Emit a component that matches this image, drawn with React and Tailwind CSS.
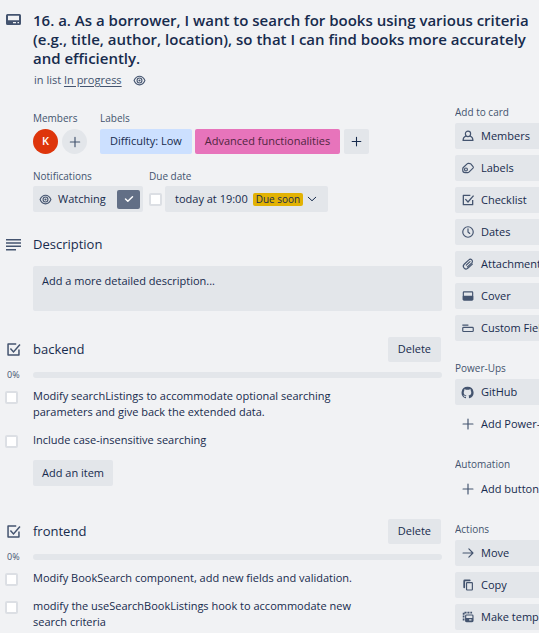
import React from "react";

const Svg = ({ size = 14, className = "", children }) => (
  <svg
    width={size}
    height={size}
    viewBox="0 0 24 24"
    fill="none"
    stroke="currentColor"
    strokeWidth="2"
    strokeLinecap="round"
    strokeLinejoin="round"
    aria-hidden="true"
    className={"shrink-0 " + className}
  >
    {children}
  </svg>
);

const CardIcon = () => (
  <svg width="15" height="12" viewBox="0 0 15 12" aria-hidden="true" className="shrink-0 text-[#44546f]">
    <path
      fill="currentColor"
      fillRule="evenodd"
      d="M1.500 0h12A1.500 1.500 0 0 1 15 1.500v8a1.500 1.500 0 0 1-1.500 1.500h-12A1.500 1.500 0 0 1 0 9.500v-8A1.500 1.500 0 0 1 1.500 0ZM2 1.800V6.300h11V1.800H2Zm5 6.200v1.200h3V8H7Zm4.500 0v1.200H13V8h-1.500Z"
    />
  </svg>
);

const EyeIcon = () => (
  <Svg size={13}>
    <path d="M2 12c2-4.700 5.500-8 10-8s8 3.300 10 8c-2 4.700-5.500 8-10 8s-8-3.300-10-8Z" />
    <circle cx="12" cy="12" r="4.500" />
    <circle cx="12" cy="12" r="1" />
  </Svg>
);

const PlusIcon = ({ size = 16 }) => (
  <Svg size={size}>
    <path d="M12 4v16M4 12h16" />
  </Svg>
);

const CheckBoxIcon = ({ size = 14, view = "0 0 24 24" }) => (
  <svg
    width={size}
    height={size}
    viewBox={view}
    fill="none"
    stroke="currentColor"
    strokeWidth="2.200"
    aria-hidden="true"
    className="shrink-0"
  >
    <path d="M16 4H4v16h16v-8" strokeLinejoin="round" />
    <path d="m7.500 10.500 4.500 5L21.500 4.500" />
  </svg>
);

const LinesIcon = () => (
  <svg width="15" height="12" viewBox="0 0 15 12" aria-hidden="true" className="shrink-0 text-[#44546f]">
    <path fill="currentColor" d="M0 0h15v1.500H0zM0 3.300h15v1.500H0zM0 6.600h15v1.500H0zM0 10h10v1.500H0z" />
  </svg>
);

const icons = {
  member: (
    <Svg>
      <path d="M12 3.500a4.500 4.500 0 0 0-4.500 4.500c0 2.500 1.500 5 4.500 5s4.500-2.500 4.500-5A4.500 4.500 0 0 0 12 3.500Z" />
      <path d="M8.500 12C5.500 13 3.500 15.500 3.500 19.500h17c0-4-2-6.500-5-7.500" />
    </Svg>
  ),
  label: (
    <Svg>
      <path d="M3 13.500c0-1 .3-1.700 1-2.400l6.500-6.300c.8-.8 1.700-1 2.700-.8l3.600.8 3.900 4.700c.6.8.6 1.800-.1 2.600l-7 7c-.6.6-1.400.9-2.200.9H7a4 4 0 0 1-4-4Z" />
      <circle cx="8.500" cy="14.500" r="2.500" />
    </Svg>
  ),
  check: <CheckBoxIcon />,
  clock: (
    <Svg>
      <circle cx="12" cy="12" r="9" />
      <path d="M12 6.500V12l3 2.500" />
    </Svg>
  ),
  clip: (
    <Svg>
      <path d="m11 17 7.500-7a3.500 3.500 0 0 0-5-5L5.500 12.500a4.600 4.600 0 0 0 6.500 6.700l7.500-7" />
      <path d="m15.500 8-6.500 6" />
    </Svg>
  ),
  cover: (
    <Svg>
      <rect x="4" y="5" width="16" height="14" rx="1" />
      <path fill="currentColor" d="M4 12.500h16V18H4z" />
    </Svg>
  ),
  fields: (
    <Svg>
      <path d="M3 7h9" />
      <rect x="3" y="11" width="18" height="7" rx="1.500" />
    </Svg>
  ),
  github: (
    <svg width="13" height="13" viewBox="2 2 20 20" fill="currentColor" aria-hidden="true" className="mr-px shrink-0">
      <path d="M12 3a9.200 9.200 0 0 0-2.900 17.900c.5.100.6-.2.600-.4v-1.700c-2.500.5-3.100-1.100-3.100-1.100-.4-1-1-1.300-1-1.300-.8-.6.1-.6.100-.6.900.1 1.400 1 1.400 1 .8 1.400 2.200 1 2.700.8.100-.6.300-1 .6-1.200-2-.2-4.200-1-4.200-4.500 0-1 .4-1.800.9-2.500-.1-.2-.4-1.200.1-2.400 0 0 .8-.2 2.500.9a8.700 8.700 0 0 1 4.600 0c1.700-1.200 2.500-.9 2.500-.9.500 1.200.2 2.200.1 2.400.6.700.9 1.500.9 2.500 0 3.500-2.100 4.300-4.200 4.500.3.300.6.900.6 1.700v2.500c0 .2.200.5.600.4A9.200 9.200 0 0 0 12 3Z" />
    </svg>
  ),
  plus: (
    <Svg>
      <path d="M12 3.500v17M3.500 12h17" />
    </Svg>
  ),
  arrow: (
    <Svg>
      <path d="M3.500 12h17M13.500 5l7 7-7 7" />
    </Svg>
  ),
  copy: (
    <Svg>
      <rect x="9.500" y="8" width="10" height="12.500" rx="1" />
      <path d="M5.500 16V5a1 1 0 0 1 1-1H15" strokeWidth="3" />
    </Svg>
  ),
  template: (
    <Svg>
      <path d="M4.500 18V4.500H19" strokeDasharray="3.500 1.500" strokeWidth="3" strokeLinecap="butt" />
      <rect x="8" y="8.500" width="12.500" height="11.500" rx="1.500" />
      <path fill="currentColor" fillRule="evenodd" stroke="none" d="M8 13.500h12.500V20H8zM14 16v1.800h4V16z" />
    </Svg>
  ),
};

const groups = [
  {
    title: "Add to card",
    items: [
      ["member", "Members"],
      ["label", "Labels"],
      ["check", "Checklist"],
      ["clock", "Dates"],
      ["clip", "Attachment"],
      ["cover", "Cover"],
      ["fields", "Custom Fields"],
    ],
  },
  { title: "Power-Ups", items: [["github", "GitHub"], ["plus", "Add Power-Ups"]] },
  { title: "Automation", items: [["plus", "Add button"]] },
  { title: "Actions", items: [["arrow", "Move"], ["copy", "Copy"], ["template", "Make template"]] },
];

const checklists = [
  {
    name: "backend",
    items: [
      "Modify searchListings to accommodate optional searching parameters and give back the extended data.",
      "Include case-insensitive searching",
    ],
    canAdd: true,
  },
  {
    name: "frontend",
    items: [
      "Modify BookSearch component, add new fields and validation.",
      "modify the useSearchBookListings hook to accommodate new search criteria",
    ],
  },
];

const box = "appearance-none size-[13px] shrink-0 rounded-xs border-2 border-[#dcdfe4] bg-white";
const caption = "text-[10px] leading-4 font-medium text-[#44546f]";

function Checklist({ name, items, canAdd }) {
  return (
    <section className="mt-[26px] pb-[7px]">
      <header className="flex h-[25px] items-center pr-px">
        <span className="w-[27px] text-[#44546f]"><CheckBoxIcon size={15} view="1 1 22 22" /></span>
        <h3 className="flex-1 text-[13px] font-medium">{name}</h3>
        <button className="h-[25px] rounded-xs bg-[#e3e6ea] px-[10px]">Delete</button>
      </header>
      <div className="mt-[5px] flex h-4 items-center">
        <span className="w-[27px] pl-px text-[9px] text-[#44546f]">0%</span>
        <div role="progressbar" aria-valuenow={0} aria-label={name} className="h-[6px] flex-1 rounded-full bg-[#e3e6ea]" />
      </div>
      <ul className="mt-[5px] flex flex-col gap-3">
        {items.map((item) => (
          <li key={item}>
            <label className="flex items-start">
              <input type="checkbox" className={box + " -ml-px mt-[3px] mr-[15px]"} />
              <span className="max-w-[330px] leading-4">{item}</span>
            </label>
          </li>
        ))}
      </ul>
      {canAdd && (
        <button className="mt-3 ml-[27px] h-[26px] rounded-xs bg-[#e3e6ea] px-[9px]">Add an item</button>
      )}
    </section>
  );
}

export default function App() {
  return (
    <div className="min-h-screen overflow-hidden bg-[#f1f2f4] font-['Open_Sans','Noto_Sans',sans-serif] text-[11px] text-[#172b4d]">
      <header className="flex pt-[11px] pl-[6px]">
        <span className="w-[27px] shrink-0 pt-[3px]"><CardIcon /></span>
        <div>
          <h1 className="text-[15px] leading-[19px] font-semibold">
            16. a. As a borrower, I want to search for books using various criteria (e.g., title, author, location), so that I can find books more accurately and efficiently.
          </h1>
          <p className="mt-[2px] flex h-5 items-center pl-px text-[#44546f]">
            in list&nbsp;<a href="#list" className="underline underline-offset-2">In progress</a>
            <span className="ml-[11px]"><EyeIcon /></span>
          </p>
        </div>
      </header>

      <div className="flex">
        <main className="min-w-0 flex-1 pr-[13px] pl-[6px]">
          <div className="mt-[20px] ml-[27px] flex">
            <div className="w-[67px]">
              <h2 className={caption}>Members</h2>
              <div className="mt-[3px] flex gap-1">
                <button className="size-[25px] rounded-full bg-[#de350b] font-semibold text-white">K</button>
                <button aria-label="Add member" className="flex size-[25px] items-center justify-center rounded-full bg-[#e3e6ea] text-[#44546f]">
                  <PlusIcon size={14} />
                </button>
              </div>
            </div>
            <div>
              <h2 className={caption}>Labels</h2>
              <div className="mt-[3px] flex gap-[3px] whitespace-nowrap">
                <button className="h-[25px] rounded-xs bg-[#cce0ff] px-[10px]">Difficulty: Low</button>
                <button className="h-[25px] rounded-xs bg-[#e774bb] px-[10px] text-[#50253f]">Advanced functionalities</button>
                <button aria-label="Add label" className="ml-px flex size-[25px] items-center justify-center rounded-xs bg-[#e3e6ea]">
                  <PlusIcon size={13} />
                </button>
              </div>
            </div>
          </div>

          <div className="mt-[14px] ml-[27px] flex gap-[6px]">
            <div>
              <h2 className={caption}>Notifications</h2>
              <button className="mt-[2px] flex h-[26px] w-[110px] items-center rounded-xs bg-[#e3e6ea] pr-[3px] pl-[6px]">
                <span className="text-[#44546f]"><EyeIcon /></span>
                <span className="ml-[6px] flex-1 text-left">Watching</span>
                <span className="flex h-[19px] w-[23px] items-center justify-center rounded-xs bg-[#626f86] text-white">
                  <Svg size={14}><path d="m6 12 4 4 8-8" strokeWidth="2.500" /></Svg>
                </span>
              </button>
            </div>
            <div>
              <h2 className={caption}>Due date</h2>
              <div className="mt-[2px] flex items-center gap-[3px]">
                <input type="checkbox" aria-label="Mark due date complete" className={box} />
                <button className="flex h-[26px] w-[163px] items-center rounded-xs bg-[#e3e6ea] pl-[10px] whitespace-nowrap">
                  today at 19:00
                  <span className="ml-[5px] h-[13px] rounded-xs bg-[#e2b203] px-[3px] text-[10px] leading-[13px] text-[#172b4d]">Due soon</span>
                  <Svg size={12} className="ml-[3px]"><path d="m4.500 8.500 7.500 7 7.500-7" /></Svg>
                </button>
              </div>
            </div>
          </div>

          <section className="mt-[23px]">
            <header className="flex h-5 items-center">
              <span className="w-[27px]"><LinesIcon /></span>
              <h3 className="text-[13px] font-medium">Description</h3>
            </header>
            <button className="mt-[11px] ml-[27px] flex h-[45px] w-[calc(100%-27px)] rounded-xs bg-[#e3e6ea] px-[9px] py-[7px] text-left leading-4">
              Add a more detailed description...
            </button>
          </section>

          {checklists.map((c) => <Checklist key={c.name} {...c} />)}
        </main>

        <aside className="w-[84px] shrink-0 overflow-hidden pt-[14px]">
          {groups.map((g) => (
            <section key={g.title} className="mb-[19px]">
              <h2 className={caption + " whitespace-nowrap"}>{g.title}</h2>
              <div className={"flex flex-col gap-[6px] " + (g.title === "Automation" ? "mt-[4px]" : "mt-[3px]")}>
                {g.items.map(([icon, text]) => (
                  <button
                    key={text}
                    className={"flex h-[26px] items-center gap-[6px] rounded-l-xs pl-[6px] whitespace-nowrap " + (icon === "plus" ? "" : "bg-[#e3e6ea]")}
                  >
                    <span className="text-[#44546f]">{icons[icon]}</span>
                    {text}
                  </button>
                ))}
              </div>
            </section>
          ))}
        </aside>
      </div>
    </div>
  );
}
